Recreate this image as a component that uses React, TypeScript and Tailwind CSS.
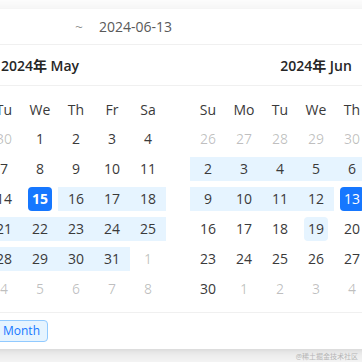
type Day = {
  d: number;
  other?: boolean;
  band?: boolean;
  sel?: "bold" | "plain";
  hover?: boolean;
};

const WEEK = ["Su", "Mo", "Tu", "We", "Th", "Fr", "Sa"];

const o = (d: number): Day => ({ d, other: true });
const n = (d: number): Day => ({ d });
const b = (d: number): Day => ({ d, band: true });

const MAY: Day[][] = [
  [o(28), o(29), o(30), n(1), n(2), n(3), n(4)],
  [n(5), n(6), n(7), n(8), n(9), n(10), n(11)],
  [n(12), n(13), n(14), { d: 15, sel: "bold" }, b(16), b(17), b(18)],
  [b(19), b(20), b(21), b(22), b(23), b(24), b(25)],
  [b(26), b(27), b(28), b(29), b(30), b(31), o(1)],
  [o(2), o(3), o(4), o(5), o(6), o(7), o(8)],
];

const JUN: Day[][] = [
  [o(26), o(27), o(28), o(29), o(30), o(31), b(1)],
  [b(2), b(3), b(4), b(5), b(6), b(7), b(8)],
  [b(9), b(10), b(11), b(12), { d: 13, sel: "plain" }, n(14), n(15)],
  [n(16), n(17), n(18), { d: 19, hover: true }, n(20), n(21), n(22)],
  [n(23), n(24), n(25), n(26), n(27), n(28), n(29)],
  [n(30), o(1), o(2), o(3), o(4), o(5), o(6)],
];

function DayCell({ day }: { day: Day }) {
  let inner = "text-[#3a3a3a]";
  if (day.other) inner = "text-[rgba(0,0,0,0.25)]";
  if (day.sel) inner = `bg-[#1677ff] text-white ${day.sel === "bold" ? "font-bold" : ""}`;
  if (day.hover) inner = "bg-[#e6f4ff] text-[#3a3a3a]";

  return (
    <div className="flex h-[30px] items-center">
      <div
        className={`flex h-6 w-full items-center justify-center ${
          day.band ? "bg-[#e6f4ff]" : ""
        }`}
      >
        <span className={`h-6 min-w-6 rounded-[4px] text-center leading-6 ${inner}`}>
          {day.d}
        </span>
      </div>
    </div>
  );
}

function MonthPanel({ title, weeks }: { title: string; weeks: Day[][] }) {
  return (
    <div className="w-[276px] shrink-0">
      <div className="flex h-[41px] items-center justify-center border-b border-[#f0f0f0] font-semibold text-[#262626]">
        {title}
      </div>
      <div className="px-3 py-2">
        <div className="grid grid-cols-7">
          {WEEK.map((w) => (
            <div key={w} className="flex h-[30px] items-center justify-center text-[#3a3a3a]">
              {w}
            </div>
          ))}
          {weeks.flat().map((day, i) => (
            <DayCell key={i} day={day} />
          ))}
        </div>
      </div>
    </div>
  );
}

export default function App() {
  return (
    <div
      className="relative h-[362px] w-[362px] overflow-hidden bg-white text-[14px]"
      style={{ fontFamily: '"Open Sans", "Noto Sans CJK SC", sans-serif' }}
    >
      <div className="pt-[9px]">
        <div className="ml-[-98px] w-[640px] bg-white shadow-[0_6px_16px_0_rgba(0,0,0,0.08),0_3px_6px_-4px_rgba(0,0,0,0.12),0_9px_28px_8px_rgba(0,0,0,0.05)]">
          <div className="flex h-[36px] items-center border-b border-[#f0f0f0] pl-[173px] text-[#595959]">
            <span className="text-[rgba(0,0,0,0.45)]">~</span>
            <span className="ml-[16px]">2024-06-13</span>
          </div>

          <div className="flex">
            <MonthPanel title="2024年 May" weeks={MAY} />
            <MonthPanel title="2024年 Jun" weeks={JUN} />
          </div>

          <div className="flex h-[37px] items-center border-t border-[#f0f0f0] pl-[93px]">
            <span className="rounded-[4px] border border-[#91caff] bg-[#e6f4ff] px-[7px] text-[12px] leading-5 text-[#1677ff]">
              Month
            </span>
          </div>
        </div>
      </div>

      <div className="absolute bottom-[2px] right-[4px] text-[7px] leading-none text-[#b5b5b5]">
        @稀土掘金技术社区
      </div>
    </div>
  );
}
